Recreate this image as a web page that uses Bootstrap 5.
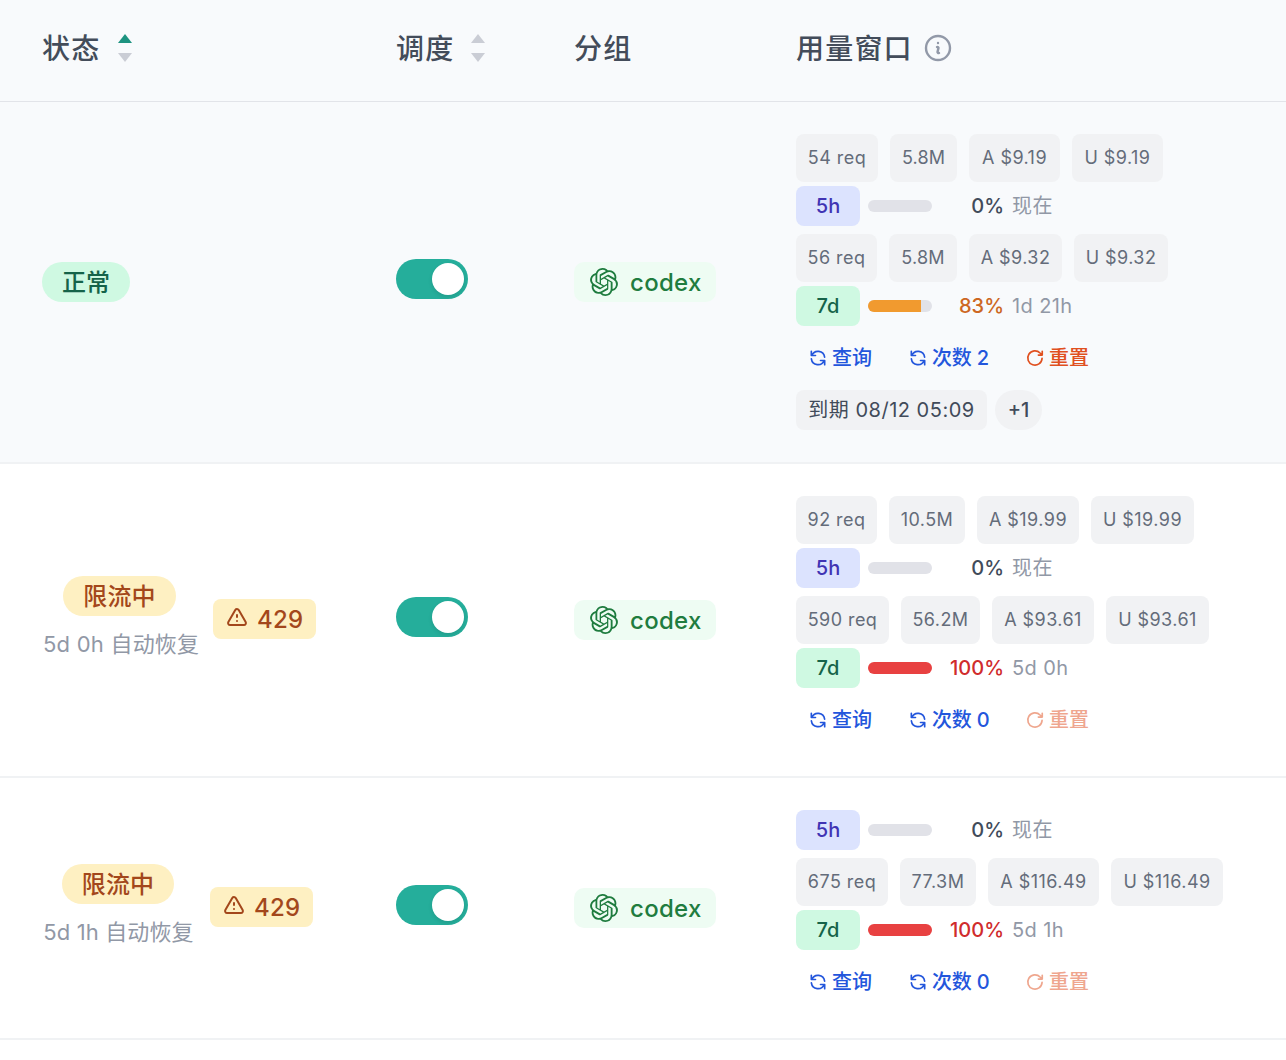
<!DOCTYPE html>
<html lang="zh-CN">
<head>
<meta charset="utf-8">
<meta name="viewport" content="width=device-width, initial-scale=1">
<title>账号状态</title>
<link href="https://cdn.jsdelivr.net/npm/bootstrap@5.3.0/dist/css/bootstrap.min.css" rel="stylesheet">
<script src="https://cdn.jsdelivr.net/npm/bootstrap@5.3.0/dist/js/bootstrap.bundle.min.js" defer></script>
<style>
body{font-family:Inter,"Noto Sans CJK SC",sans-serif;background:#fff;color:#414b5a;width:1286px;height:1060px;overflow:hidden}
.acct{table-layout:fixed;border-collapse:separate;border-spacing:0;width:1286px}
.acct th,.acct td{padding:0 0 0 42px;vertical-align:middle;white-space:nowrap}
.acct th{height:102px;background:#f8fafc;border-bottom:1px solid #e2e4e9;font-size:28px;font-weight:500;letter-spacing:1.2px;color:#434c5a;line-height:40px;padding-bottom:4px}
.acct td{border-bottom:2px solid #f0f2f4}
.acct tr.hov td{background:#f8fafc}
.h1r td{height:362px}.h2r td{height:314px}.h3r td{height:262px}
.sorter{margin-left:17px;margin-top:-2px}
.sorter-b{margin-left:16px}
.infox{margin-left:9px;margin-top:-2px}
.pillx{height:40px;border-radius:20px;padding:1px 20px 0;font-size:24px;font-weight:500;line-height:40px;display:inline-block}
.pill-ok{background:#cff9e2;color:#156349}
.pill-lim{background:#fef0c2;color:#a3471b}
.stcol{padding-bottom:4px}
.subx{font-size:22px;line-height:32px;color:#9198a6;margin-top:12px;padding-left:1px}
.sub-w0{width:155px;letter-spacing:.22px;margin-right:16px}
.sub-w1{width:152px;letter-spacing:.13px;margin-right:16px}
.err{height:40px;border-radius:8px;background:#fef0c2;color:#a3471b;font-size:24px;font-weight:500;padding:1px 12px 0;letter-spacing:.2px;width:103px;gap:8px;margin-top:-2px}
.err svg{margin-top:-3px}
.switchx{width:72px;height:40px;border-radius:20px;background:#25ae9b;padding:4px;margin-top:-6px}
.switchx i{width:32px;height:32px;border-radius:50%;background:#fff;box-shadow:0 2px 4px rgba(0,0,0,.1)}
.grp{width:142px;height:40px;border-radius:10px;background:#eefcf3;color:#1f7c3f;font-size:24px;font-weight:500;letter-spacing:.3px;padding:1px 0 0 16px;gap:12px}
.grp svg{margin-top:-2px}
.chips{gap:12px}
.chip{height:48px;line-height:48px;border-radius:8px;background:#f1f2f4;color:#646c7a;font-size:18px;letter-spacing:.45px;text-align:center}
.c67{width:67px;letter-spacing:.15px}.c68{width:68px;letter-spacing:.2px}.c76{width:76px}.c79{width:79px}.c81{width:81px}.c82{width:82px}
.c91{width:91px}.c92{width:92px}.c93{width:93px}.c94{width:94px}.c102{width:102px}.c103{width:103px}.c111{width:111px}.c112{width:112px}
.win{width:64px;height:40px;line-height:40px;border-radius:8px;text-align:center;font-size:20px;font-weight:500;margin-right:8px}
.w5{background:#dce3fe;color:#4034b4}
.w7{background:#cff9e2;color:#156349}
.barx{width:64px;height:12px;border-radius:6px;background:#e1e2e8;overflow:hidden}
.barx i{display:block;height:12px}
.bg-o{background:#f19a2f}.bg-r{background:#e84141}
.pct{width:72px;text-align:right;font-size:20px;font-weight:500;margin-right:8px}
.t-o{color:#cd6722}.t-r{color:#d02c2c}
.left{font-size:20px;color:#9198a6;letter-spacing:.4px}
.acts{height:48px;font-size:20px;font-weight:500;color:#2356dc;gap:12px;padding-left:0}
.acts span{display:flex;align-items:center;gap:4px;padding:0 12px;white-space:pre}
.acts .q2{width:105px;letter-spacing:-.2px}
.acts .rst{color:#e0501f}
.acts .dim{opacity:.5}
.due{height:40px;line-height:40px;border-radius:8px;background:#f1f2f4;font-size:20px;width:191px;text-align:center;letter-spacing:.5px}
.more{height:40px;line-height:40px;border-radius:20px;background:#f1f2f4;font-size:20px;font-weight:500;width:47px;text-align:center}
svg{flex:none}
</style>
</head>
<body>
<svg width="0" height="0" class="position-absolute">
<symbol id="sync" viewBox="0 0 24 24"><path fill="none" stroke="currentColor" stroke-width="2" stroke-linecap="round" stroke-linejoin="round" d="M4 4v5h.582m15.356 2A8.001 8.001 0 004.582 9m0 0H9m11 11v-5h-.581m0 0a8.003 8.003 0 01-15.357-2m15.357 2H15"/></symbol>
<symbol id="redo" viewBox="0 0 24 24"><path fill="none" stroke="currentColor" stroke-width="2" stroke-linecap="round" stroke-linejoin="round" d="M20.500 12.500a8.600 8.600 0 1 1-2.400-6.500L20.500 8.300M20.700 4v4.500h-4.700"/></symbol>
<symbol id="warn" viewBox="0 0 24 24"><path fill="none" stroke="currentColor" stroke-width="2" stroke-linecap="round" stroke-linejoin="round" d="M12 9v2m0 4h.01m-6.938 4h13.856c1.54 0 2.502-1.667 1.732-3L13.732 4c-.77-1.333-2.694-1.333-3.464 0L3.34 16c-.77 1.333.192 3 1.732 3z"/></symbol>
<symbol id="oai" viewBox="0 0 24 24"><path fill="currentColor" d="M22.2819 9.8211a5.9847 5.9847 0 0 0-.5157-4.9108 6.0462 6.0462 0 0 0-6.5098-2.9A6.0651 6.0651 0 0 0 4.9807 4.1818a5.9847 5.9847 0 0 0-3.9977 2.9 6.0462 6.0462 0 0 0 .7427 7.0966 5.98 5.98 0 0 0 .511 4.9107 6.051 6.051 0 0 0 6.5146 2.9001A5.9847 5.9847 0 0 0 13.2599 24a6.0557 6.0557 0 0 0 5.7718-4.2058 5.9894 5.9894 0 0 0 3.9977-2.9001 6.0557 6.0557 0 0 0-.7475-7.0729zm-9.022 12.6081a4.4755 4.4755 0 0 1-2.8764-1.0408l.1419-.0804 4.7783-2.7582a.7948.7948 0 0 0 .3927-.6813v-6.7369l2.02 1.1686a.071.071 0 0 1 .038.052v5.5826a4.504 4.504 0 0 1-4.4945 4.4944zm-9.6607-4.1254a4.4708 4.4708 0 0 1-.5346-3.0137l.142.0852 4.783 2.7582a.7712.7712 0 0 0 .7806 0l5.8428-3.3685v2.3324a.0804.0804 0 0 1-.0332.0615L9.74 19.9502a4.4992 4.4992 0 0 1-6.1408-1.6464zM2.3408 7.8956a4.485 4.485 0 0 1 2.3655-1.9728V11.6a.7664.7664 0 0 0 .3879.6765l5.8144 3.3543-2.0201 1.1685a.0757.0757 0 0 1-.071 0l-4.8303-2.7865A4.504 4.504 0 0 1 2.3408 7.872zm16.5963 3.8558L13.1038 8.364 15.1192 7.2a.0757.0757 0 0 1 .071 0l4.8303 2.7913a4.4944 4.4944 0 0 1-.6765 8.1042v-5.6772a.79.79 0 0 0-.407-.667zm2.0107-3.0231l-.142-.0852-4.7735-2.7818a.7759.7759 0 0 0-.7854 0L9.409 9.2297V6.8974a.0662.0662 0 0 1 .0284-.0615l4.8303-2.7866a4.4992 4.4992 0 0 1 6.6802 4.66zM8.3065 12.863l-2.02-1.1638a.0804.0804 0 0 1-.038-.0567V6.0742a4.4992 4.4992 0 0 1 7.3757-3.4537l-.142.0805L8.704 5.459a.7948.7948 0 0 0-.3927.6813zm1.0976-2.3654l2.602-1.4998 2.6069 1.4998v2.9994l-2.5974 1.4997-2.6067-1.4997Z"/></symbol>
</svg>
<table class="acct">
<colgroup><col style="width:354px"><col style="width:178px"><col style="width:222px"><col></colgroup>
<thead><tr>
<th><div class="d-flex align-items-center">状态<svg class="sorter" width="16" height="28" viewBox="0 0 16 28"><path fill="#1d9380" d="M1 9 8 0l7 9z"/><path fill="#cacdd5" d="M1 19h14l-7 9z"/></svg></div></th>
<th><div class="d-flex align-items-center">调度<svg class="sorter sorter-b" width="16" height="28" viewBox="0 0 16 28"><path fill="#cacdd5" d="M1 9 8 0l7 9z"/><path fill="#cacdd5" d="M1 19h14l-7 9z"/></svg></div></th>
<th>分组</th>
<th><div class="d-flex align-items-center">用量窗口<svg class="infox" width="32" height="32" viewBox="0 0 24 24" fill="none" stroke="#9299a8" stroke-width="1.800" stroke-linecap="round" stroke-linejoin="round"><path d="m11.250 11.250.041-.020a.750.750 0 0 1 1.063.852l-.708 2.836a.750.750 0 0 0 1.063.853l.041-.021M21 12a9 9 0 1 1-18 0 9 9 0 0 1 18 0Zm-9-3.750h.008v.008H12V8.250Z"/></svg></div></th>
</tr></thead>
<tbody>
<tr class="hov h1r">
<td><span class="pillx pill-ok">正常</span></td>
<td><div class="switchx d-flex justify-content-end"><i></i></div></td>
<td><div class="grp d-flex align-items-center"><svg width="28" height="28"><use href="#oai"/></svg>codex</div></td>
<td><div class="d-flex flex-column">
<div class="chips d-flex"><span class="chip c82">54 req</span><span class="chip c67">5.8M</span><span class="chip c91">A $9.19</span><span class="chip c91">U $9.19</span></div>
<div class="d-flex align-items-center mt-1 mb-2"><span class="win w5">5h</span><span class="barx"></span><span class="pct">0%</span><span class="left">现在</span></div>
<div class="chips d-flex"><span class="chip c81">56 req</span><span class="chip c68">5.8M</span><span class="chip c93">A $9.32</span><span class="chip c94">U $9.32</span></div>
<div class="d-flex align-items-center mt-1 mb-2"><span class="win w7">7d</span><span class="barx"><i class="bg-o" style="width:83%"></i></span><span class="pct t-o">83%</span><span class="left">1d 21h</span></div>
<div class="acts d-flex align-items-center"><span class="q1"><svg width="20" height="20"><use href="#sync"/></svg>查询</span><span class="q2"><svg width="20" height="20"><use href="#sync"/></svg>次数 2</span><span class="rst"><svg width="20" height="20"><use href="#redo"/></svg>重置</span></div>
<div class="d-flex mt-2 gap-2"><span class="due">到期 08/12 05:09</span><span class="more">+1</span></div>
</div></td>
</tr>
<tr class="h2r">
<td><div class="d-flex align-items-center"><div class="stcol text-center sub-w0"><span class="pillx pill-lim">限流中</span><div class="subx">5d 0h 自动恢复</div></div><div class="err d-flex align-items-center"><svg width="24" height="24"><use href="#warn"/></svg>429</div></div></td>
<td><div class="switchx d-flex justify-content-end"><i></i></div></td>
<td><div class="grp d-flex align-items-center"><svg width="28" height="28"><use href="#oai"/></svg>codex</div></td>
<td><div class="d-flex flex-column">
<div class="chips d-flex"><span class="chip c81">92 req</span><span class="chip c76">10.5M</span><span class="chip c102">A $19.99</span><span class="chip c103">U $19.99</span></div>
<div class="d-flex align-items-center mt-1 mb-2"><span class="win w5">5h</span><span class="barx"></span><span class="pct">0%</span><span class="left">现在</span></div>
<div class="chips d-flex"><span class="chip c93">590 req</span><span class="chip c79">56.2M</span><span class="chip c102">A $93.61</span><span class="chip c103">U $93.61</span></div>
<div class="d-flex align-items-center mt-1 mb-2"><span class="win w7">7d</span><span class="barx"><i class="bg-r" style="width:100%"></i></span><span class="pct t-r">100%</span><span class="left">5d 0h</span></div>
<div class="acts d-flex align-items-center"><span class="q1"><svg width="20" height="20"><use href="#sync"/></svg>查询</span><span class="q2"><svg width="20" height="20"><use href="#sync"/></svg>次数 0</span><span class="rst dim"><svg width="20" height="20"><use href="#redo"/></svg>重置</span></div>
</div></td>
</tr>
<tr class="h3r">
<td><div class="d-flex align-items-center"><div class="stcol text-center sub-w1"><span class="pillx pill-lim">限流中</span><div class="subx">5d 1h 自动恢复</div></div><div class="err d-flex align-items-center"><svg width="24" height="24"><use href="#warn"/></svg>429</div></div></td>
<td><div class="switchx d-flex justify-content-end"><i></i></div></td>
<td><div class="grp d-flex align-items-center"><svg width="28" height="28"><use href="#oai"/></svg>codex</div></td>
<td><div class="d-flex flex-column">
<div class="d-flex align-items-center mb-2"><span class="win w5">5h</span><span class="barx"></span><span class="pct">0%</span><span class="left">现在</span></div>
<div class="chips d-flex"><span class="chip c92">675 req</span><span class="chip c76">77.3M</span><span class="chip c111">A $116.49</span><span class="chip c112">U $116.49</span></div>
<div class="d-flex align-items-center mt-1 mb-2"><span class="win w7">7d</span><span class="barx"><i class="bg-r" style="width:100%"></i></span><span class="pct t-r">100%</span><span class="left">5d 1h</span></div>
<div class="acts d-flex align-items-center"><span class="q1"><svg width="20" height="20"><use href="#sync"/></svg>查询</span><span class="q2"><svg width="20" height="20"><use href="#sync"/></svg>次数 0</span><span class="rst dim"><svg width="20" height="20"><use href="#redo"/></svg>重置</span></div>
</div></td>
</tr>
</tbody>
</table>
</body>
</html>
